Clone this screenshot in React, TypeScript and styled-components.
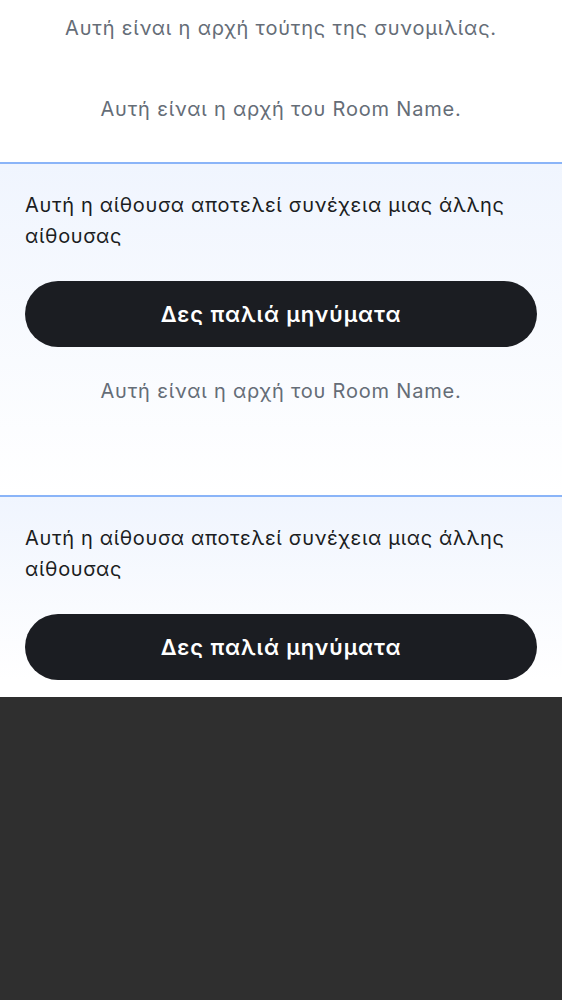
import { createGlobalStyle } from "styled-components";
import styled from "styled-components";

const GlobalStyle = createGlobalStyle`
  html, body {
    margin: 0;
    padding: 0;
    background-color: #2f2f2f;
  }
  body {
    font-family: Inter, "Noto Sans", sans-serif;
    -webkit-font-smoothing: antialiased;
  }
`;

const Timeline = styled.div`
  background-color: #ffffff;
  padding-bottom: 17px;
`;

const Notice = styled.p`
  margin: 0;
  text-align: center;
  color: #656d77;
  font-size: 20px;
  line-height: 30px;
  letter-spacing: 0.8px;
`;

const Intro = styled.div`
  display: flex;
  flex-direction: column;
  gap: 51px;
  padding: 13px 25px 38px;
`;

const Predecessor = styled.section<{ $tall?: boolean }>`
  border-top: 2px solid #8ab4f8;
  background: linear-gradient(180deg, #f0f5fe 0%, #ffffff 100%);
  padding: 26px 25px 0;
  display: flex;
  flex-direction: column;
  min-height: ${(p) => (p.$tall ? "305px" : "auto")};
  box-sizing: content-box;
`;

const Message = styled.p`
  margin: 0;
  color: #1b1d22;
  font-size: 20px;
  line-height: 31px;
  letter-spacing: 0.65px;
`;

const OldMessagesButton = styled.button`
  margin-top: 29px;
  height: 66px;
  width: 100%;
  border: none;
  border-radius: 33px;
  background-color: #1b1d22;
  color: #ffffff;
  font-family: Inter, "Noto Sans", sans-serif;
  font-size: 22px;
  font-weight: 600;
  letter-spacing: 0.9px;
  cursor: pointer;
`;

const RoomStart = styled(Notice)`
  margin-top: 29px;
`;

const roomText = "Αυτή η αίθουσα αποτελεί συνέχεια μιας άλλης αίθουσας";

const App = () => {
  return (
    <>
      <GlobalStyle />
      <Timeline>
        <Intro>
          <Notice>Αυτή είναι η αρχή τούτης της συνομιλίας.</Notice>
          <Notice>Αυτή είναι η αρχή του Room Name.</Notice>
        </Intro>
        <Predecessor $tall>
          <Message>{roomText}</Message>
          <OldMessagesButton>Δες παλιά μηνύματα</OldMessagesButton>
          <RoomStart>Αυτή είναι η αρχή του Room Name.</RoomStart>
        </Predecessor>
        <Predecessor>
          <Message>{roomText}</Message>
          <OldMessagesButton>Δες παλιά μηνύματα</OldMessagesButton>
        </Predecessor>
      </Timeline>
    </>
  );
};

export default App;
